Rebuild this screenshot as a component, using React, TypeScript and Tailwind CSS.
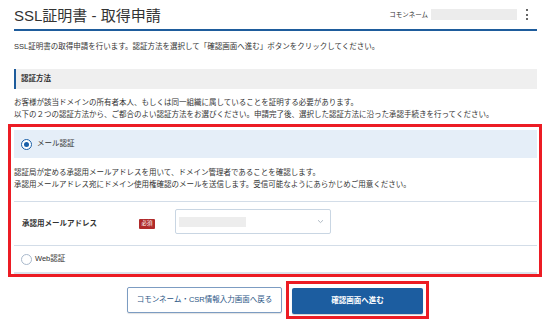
import React from 'react';

// ============================================================
// SSL certificate request: choose verification method
// ============================================================

function Radio({ checked }: { checked: boolean }) {
  return checked ? (
    <span className="w-[11px] h-[11px] rounded-full border-[1.5px] border-[#1a5fa8] bg-white flex items-center justify-center shrink-0">
      <span className="w-[5px] h-[5px] rounded-full bg-[#1a5fa8]" />
    </span>
  ) : (
    <span className="w-[11px] h-[11px] rounded-full border border-[#a9b9cc] bg-white shrink-0" />
  );
}

export default function App() {
  return (
    <div className="w-[552px] h-[327px] overflow-hidden bg-white pl-[14px] pr-[15px] font-['Liberation_Sans','Noto_Sans_CJK_JP',sans-serif] text-[#333]">
      {/* Page header */}
      <div className="flex items-center h-[31px] border-b-2 border-[#1e5c9c]">
        <h1 className="flex-1 text-[15px] leading-[20px] pt-[3px]">SSL証明書 - 取得申請</h1>
        <span className="text-[6.5px] leading-[10px]">コモンネーム</span>
        <div className="ml-[3px] w-[86px] h-[11px] bg-[#ececec]" />
        <div className="ml-[9px] mr-[9px] flex flex-col gap-[2.5px]">
          <span className="w-[2px] h-[2px] rounded-full bg-[#333]" />
          <span className="w-[2px] h-[2px] rounded-full bg-[#333]" />
          <span className="w-[2px] h-[2px] rounded-full bg-[#333]" />
        </div>
      </div>

      {/* Intro */}
      <p className="mt-[10px] text-[7.5px] leading-[12px]">
        SSL証明書の取得申請を行います。認証方法を選択して「確認画面へ進む」ボタンをクリックしてください。
      </p>

      {/* Section title */}
      <div className="mt-[16px] h-[20px] bg-[#efefef] border-l-2 border-[#1e5c9c] pl-[5px] flex items-center text-[7.5px] font-bold">
        認証方法
      </div>

      <p className="mt-[8px] text-[7.5px] leading-[12px]">
        お客様が該当ドメインの所有者本人、もしくは同一組織に属していることを証明する必要があります。
        <br />
        以下の２つの認証方法から、ご都合のよい認証方法をお選びください。申請完了後、選択した認証方法に沿った承認手続きを行ってください。
      </p>

      {/* Verification methods (highlighted) */}
      <div className="mt-[3px] ml-[-6px] mr-[-5px] border-[3px] border-[#ec1c24] pl-[3px] pr-[2px] pt-[3px]">
        <div className="h-[28px] bg-[#e5eef8] flex items-center pl-[7px] gap-[5px]">
          <Radio checked />
          <span className="text-[7.5px]">メール認証</span>
        </div>

        <p className="pt-[9px] pb-[10px] text-[7.5px] leading-[12px] border-b border-[#d3dde8]">
          認証局が定める承認用メールアドレスを用いて、ドメイン管理者であることを確認します。
          <br />
          承認用メールアドレス宛にドメイン使用権確認のメールを送信します。受信可能なようにあらかじめご用意ください。
        </p>

        <div className="h-[44px] flex items-center pl-[8px] border-b border-[#d3dde8]">
          <span className="w-[117px] text-[7.5px] font-bold">承認用メールアドレス</span>
          <span className="w-[16px] h-[10px] bg-[#b02a2a] text-white text-[5.5px] leading-none flex items-center justify-center rounded-[1px]">
            必須
          </span>
          <div className="ml-[20px] mb-[4px] w-[156px] h-[25px] border border-[#c9d6e3] rounded-[2px] flex items-center pl-[3px] pr-[6px]">
            <div className="w-[67px] h-[10px] bg-[#ededed]" />
            <svg className="ml-auto" width="7" height="5" viewBox="0 0 7 5" fill="none">
              <path d="M1 1.2 3.5 3.6 6 1.2" stroke="#a8b4c0" strokeWidth="0.9" />
            </svg>
          </div>
        </div>

        <div className="h-[28px] flex items-center pl-[7px] gap-[3px] border-b-2 border-[#dbe3ec]">
          <Radio checked={false} />
          <span className="text-[7.5px]">Web認証</span>
        </div>
      </div>

      {/* Actions */}
      <div className="mt-[4px] flex items-center pl-[113px] gap-[4px]">
        <button className="w-[155px] h-[26px] border border-[#7c9cc2] rounded-[2px] bg-white text-[#2b5585] text-[7.5px] shadow-[0_1px_1px_rgba(0,0,0,0.12)]">
          コモンネーム・CSR情報入力画面へ戻る
        </button>
        <div className="border-[3px] border-[#ec1c24] px-[3px] py-[2px]">
          <button className="w-[131px] h-[26px] rounded-[2px] bg-[#1c5da0] text-white text-[7.5px] font-bold shadow-[0_1px_1px_rgba(0,0,0,0.2)]">
            確認画面へ進む
          </button>
        </div>
      </div>
    </div>
  );
}
